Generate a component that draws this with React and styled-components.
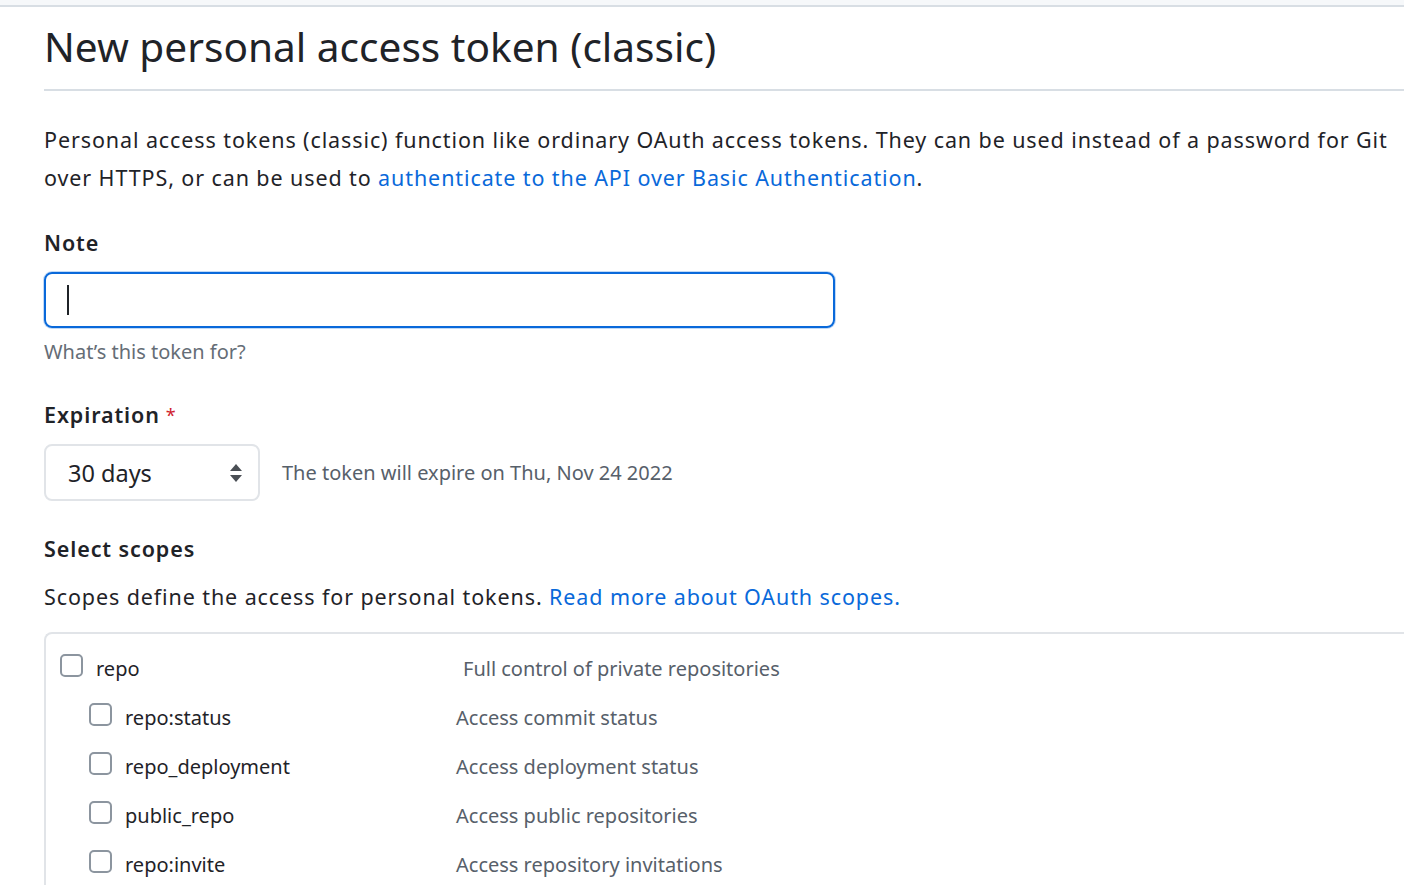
import React from "react";
import styled, { createGlobalStyle } from "styled-components";

const GlobalStyle = createGlobalStyle`
  html, body {
    margin: 0;
    padding: 0;
    background: #ffffff;
    overflow: hidden;
  }
  body {
    font-family: "Noto Sans", "Open Sans", sans-serif;
    color: #1f2328;
  }
`;

const TopBar = styled.div`
  height: 5px;
  background: #f6f8fa;
  border-bottom: 2px solid #d8dee4;
`;

const Page = styled.main`
  padding: 0 0 0 44px;
  width: 1400px;
`;

const Title = styled.h2`
  margin: 0;
  padding: 16px 0 18px;
  font-size: 40.6px;
  font-weight: 400;
  line-height: 48px;
  border-bottom: 2px solid #d8dee4;
`;

const Lead = styled.p`
  margin: 30px 0 0;
  font-size: 21.5px;
  letter-spacing: 0.9px;
  line-height: 38px;
  width: 1350px;
`;

const TextLink = styled.a`
  color: #0969da;
  text-decoration: none;
`;

const Field = styled.div`
  margin-top: ${(p) => p.$top}px;
`;

const Label = styled.div`
  font-size: 21.5px;
  font-weight: 600;
  letter-spacing: 0.9px;
  line-height: 30px;
  margin-bottom: ${(p) => p.$gap || 0}px;
`;

const Required = styled.span`
  color: #cf222e;
  font-weight: 400;
  font-size: 18px;
  vertical-align: top;
  margin-left: 6px;
`;

const TextInput = styled.div`
  box-sizing: border-box;
  width: 791px;
  height: 56px;
  border: 2px solid #0969da;
  border-radius: 8px;
  box-shadow: 0 0 0 1px rgba(9, 105, 218, 0.25);
  display: flex;
  align-items: center;
  padding-left: 21px;
`;

const Caret = styled.span`
  display: block;
  width: 2px;
  height: 30px;
  background: #1f2328;
`;

const Hint = styled.div`
  margin-top: 12px;
  font-size: 20px;
  line-height: 24px;
  color: #656d76;
`;

const SelectRow = styled.div`
  display: flex;
  align-items: center;
  gap: 22px;
`;

const Select = styled.div`
  box-sizing: border-box;
  width: 216px;
  height: 57px;
  border: 2px solid #e1e4e8;
  border-radius: 8px;
  display: flex;
  align-items: center;
  justify-content: space-between;
  padding: 0 14px 0 22px;
  font-size: 23.5px;
`;

const Muted = styled.span`
  font-size: 20px;
  color: #57606a;
`;

const Paragraph = styled.div`
  font-size: 21.5px;
  letter-spacing: 0.9px;
  line-height: 30px;
  margin-top: 18px;
`;

const ScopeBox = styled.div`
  margin-top: 20px;
  border: 2px solid #e1e4e8;
  border-right: none;
  border-bottom: none;
  border-top-left-radius: 8px;
  padding: 10px 0 0 14px;
  height: 300px;
`;

const ScopeRow = styled.div`
  display: grid;
  grid-template-columns: ${(p) => (p.$child ? "36px 331px 1fr" : "36px 367px 1fr")};
  align-items: center;
  height: 49px;
  padding-left: ${(p) => (p.$child ? 29 : 0)}px;
`;

const Check = styled.span`
  box-sizing: border-box;
  display: block;
  width: 23px;
  height: 23px;
  border: 2px solid #8c959f;
  border-radius: 5px;
  margin-top: -6px;
`;

const ScopeName = styled.span`
  font-size: 20px;
  color: #1f2328;
`;

const ScopeDesc = styled.span`
  font-size: 20px;
  color: #57606a;
`;

const Arrows = () => (
  <svg width="16" height="22" viewBox="0 0 16 22">
    <path d="M8 2 L14 9 H2 Z" fill="#4a4f55" />
    <path d="M8 20 L14 13 H2 Z" fill="#4a4f55" />
  </svg>
);

const scopes = [
  { name: "repo", desc: "Full control of private repositories" },
  { name: "repo:status", desc: "Access commit status", child: true },
  { name: "repo_deployment", desc: "Access deployment status", child: true },
  { name: "public_repo", desc: "Access public repositories", child: true },
  { name: "repo:invite", desc: "Access repository invitations", child: true },
];

const App = () => {
  return (
    <>
      <GlobalStyle />
      <TopBar />
      <Page>
        <Title>New personal access token (classic)</Title>
        <Lead>
          Personal access tokens (classic) function like ordinary OAuth access tokens. They can be
          used instead of a password for Git over HTTPS, or can be used to{" "}
          <TextLink href="#">authenticate to the API over Basic Authentication</TextLink>.
        </Lead>

        <Field $top={31}>
          <Label $gap={14}>Note</Label>
          <TextInput>
            <Caret />
          </TextInput>
          <Hint>What’s this token for?</Hint>
        </Field>

        <Field $top={36}>
          <Label $gap={14}>
            Expiration<Required>*</Required>
          </Label>
          <SelectRow>
            <Select>
              30 days
              <Arrows />
            </Select>
            <Muted>The token will expire on Thu, Nov 24 2022</Muted>
          </SelectRow>
        </Field>

        <Field $top={33}>
          <Label>Select scopes</Label>
          <Paragraph>
            Scopes define the access for personal tokens.{" "}
            <TextLink href="#">Read more about OAuth scopes.</TextLink>
          </Paragraph>
          <ScopeBox>
            {scopes.map((s) => (
              <ScopeRow key={s.name} $child={s.child}>
                <Check />
                <ScopeName>{s.name}</ScopeName>
                <ScopeDesc>{s.desc}</ScopeDesc>
              </ScopeRow>
            ))}
          </ScopeBox>
        </Field>
      </Page>
    </>
  );
};

export default App;
